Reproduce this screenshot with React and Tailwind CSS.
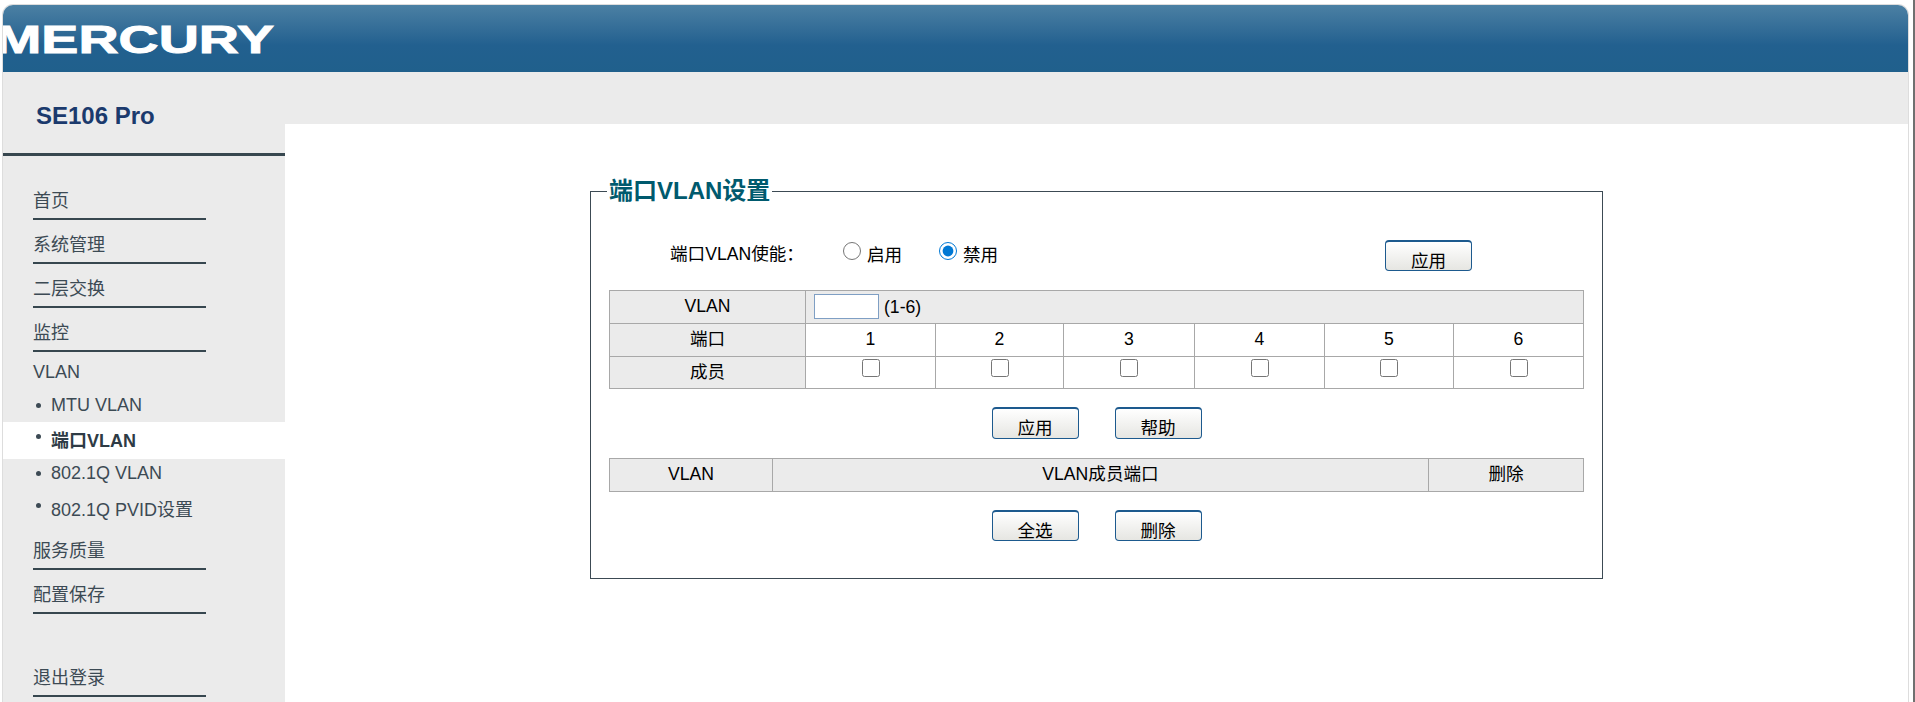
const FONT = 'font-["Liberation_Sans","Noto_Sans_CJK_SC",sans-serif]';

function NavItem({ children, className = "" }) {
  return (
    <div className={`ml-[30px] flex h-[44px] w-[173px] items-end border-b-2 border-[#37474f] pb-[5px] text-[18px] leading-[24px] text-[#3c4a54] ${className}`}>
      {children}
    </div>
  );
}

function SubItem({ children, active = false, rowClass = "", bulletClass = "" }) {
  return (
    <div className={`flex items-center pl-[33px] text-[18px] leading-[24px] ${active ? "bg-white font-bold text-[#2e3b45]" : "text-[#3c4a54]"} ${rowClass}`}>
      <span className={`h-[5px] w-[5px] rounded-full bg-[#3c4a54] ${bulletClass}`} />
      <span className="ml-[13px] -translate-x-[3px]">{children}</span>
    </div>
  );
}

function Btn({ children }) {
  return (
    <button className="h-full w-[87px] rounded-[4px] border border-t-2 border-[#1d5a8e] bg-linear-to-b from-white to-[#e6e6e2] pt-[9px] text-[17.6px] leading-[20px] text-black">
      {children}
    </button>
  );
}

const cell = "border border-[#a8a8a8] text-center align-middle text-[17.6px] font-normal text-black";
const lift = "pb-[2px]";
const ports = [1, 2, 3, 4, 5, 6];

export default function App() {
  return (
    <div className={`h-[702px] w-full overflow-hidden border-r-2 border-[#707070] bg-white pl-[2px] pt-[4px] ${FONT}`}>
      <div className="h-[698px] w-[1907px] overflow-hidden rounded-t-[11px] border-x border-t border-[#dddddd]">
        <header className="h-[67px] overflow-hidden bg-linear-to-b from-[#4b80a3] via-[#22608f] via-60% to-[#20608c]">
          <svg width="300" height="67" className="block" aria-label="MERCURY">
            <text
              x="-8"
              y="48"
              fill="#ffffff"
              stroke="#ffffff"
              strokeWidth="0.9"
              fontFamily="Liberation Sans"
              fontWeight="700"
              fontSize="39"
              textLength="279"
              lengthAdjust="spacingAndGlyphs"
            >
              MERCURY
            </text>
          </svg>
        </header>
        <div className="flex h-[631px]">
          <aside className="h-full w-[282px] shrink-0 bg-[#ebebeb]">
            <div className="flex h-[84px] items-start border-b-[3px] border-[#37474f] pl-[33px] pt-[28px] text-[24px] font-bold leading-[32px] text-[#1b3a6d]">
              SE106 Pro
            </div>
            <nav className="pt-[20px]">
              <NavItem>首页</NavItem>
              <NavItem>系统管理</NavItem>
              <NavItem>二层交换</NavItem>
              <NavItem>监控</NavItem>
              <div className="ml-[30px] mt-[8px] text-[18px] leading-[24px] text-[#3c4a54]">VLAN</div>
              <SubItem rowClass="mt-[4px] h-[34px]">MTU VLAN</SubItem>
              <SubItem active rowClass="h-[37px] pt-[1px]" bulletClass="-translate-y-[5px]">端口VLAN</SubItem>
              <SubItem rowClass="h-[28px]">802.1Q VLAN</SubItem>
              <SubItem rowClass="h-[39px] pt-[7px]" bulletClass="-translate-y-[5px]">802.1Q PVID设置</SubItem>
              <NavItem>服务质量</NavItem>
              <NavItem>配置保存</NavItem>
              <NavItem className="mt-[39px]">退出登录</NavItem>
            </nav>
          </aside>
          <main className="min-w-0 flex-1">
            <div className="h-[52px] bg-[#ebebeb]" />
            <fieldset className="ml-[305px] mt-[52px] h-[403px] w-[1013px] border border-[#3c4a54]">
              <legend className="ml-[16px] px-[2px] text-[24px] font-bold leading-[30px] text-[#005a6e]">
                端口VLAN设置
              </legend>
              <div className="mt-[34px] flex h-[31px] items-center text-[17.6px] text-black">
                <span className="ml-[79px] w-[173px] -translate-y-[1px]">端口VLAN使能：</span>
                <label className="flex w-[96px] items-center gap-[6px]">
                  <input type="radio" name="en" className="h-[18px] w-[18px] -translate-y-[4px]" />
                  启用
                </label>
                <label className="flex items-center gap-[6px]">
                  <input type="radio" name="en" defaultChecked className="h-[18px] w-[18px] -translate-y-[4px] accent-[#0078d4]" />
                  禁用
                </label>
                <div className="ml-auto mr-[130px] h-[31px]">
                  <Btn>应用</Btn>
                </div>
              </div>
              <table className="ml-[18px] mt-[19px] w-[974px] table-fixed border-collapse">
                <colgroup>
                  <col className="w-[196px]" />
                  <col className="w-[130px]" />
                  <col className="w-[128px]" />
                  <col className="w-[131px]" />
                  <col className="w-[130px]" />
                  <col className="w-[129px]" />
                  <col className="w-[130px]" />
                </colgroup>
                <tbody>
                  <tr className="h-[33px] bg-[#ebebeb]">
                    <th className={`${cell} ${lift}`}>VLAN</th>
                    <td colSpan={6} className={`${cell} text-left`}>
                      <div className="flex items-center pl-[8px]">
                        <input type="text" className="h-[25px] w-[65px] border border-[#7f9fc4] bg-white" />
                        <span className="ml-[5px]">(1-6)</span>
                      </div>
                    </td>
                  </tr>
                  <tr className="h-[33px]">
                    <th className={`${cell} ${lift} bg-[#ebebeb]`}>端口</th>
                    {ports.map((p) => (
                      <td key={p} className={`${cell} ${lift}`}>{p}</td>
                    ))}
                  </tr>
                  <tr className="h-[32px]">
                    <th className={`${cell} bg-[#ebebeb]`}>成员</th>
                    {ports.map((p) => (
                      <td key={p} className={cell}>
                        <input type="checkbox" className="block mx-auto h-[18px] w-[18px] -translate-y-[5px]" />
                      </td>
                    ))}
                  </tr>
                </tbody>
              </table>
              <div className="mt-[18px] flex h-[32px] justify-center gap-[36px]">
                <Btn>应用</Btn>
                <Btn>帮助</Btn>
              </div>
              <table className="ml-[18px] mt-[19px] w-[974px] table-fixed border-collapse">
                <colgroup>
                  <col className="w-[163px]" />
                  <col className="w-[656px]" />
                  <col className="w-[155px]" />
                </colgroup>
                <tbody>
                  <tr className="h-[33px] bg-[#ebebeb]">
                    <th className={`${cell} ${lift}`}>VLAN</th>
                    <th className={`${cell} ${lift}`}>VLAN成员端口</th>
                    <th className={`${cell} ${lift}`}>删除</th>
                  </tr>
                </tbody>
              </table>
              <div className="mt-[18px] flex h-[31px] justify-center gap-[36px]">
                <Btn>全选</Btn>
                <Btn>删除</Btn>
              </div>
            </fieldset>
          </main>
        </div>
      </div>
    </div>
  );
}
